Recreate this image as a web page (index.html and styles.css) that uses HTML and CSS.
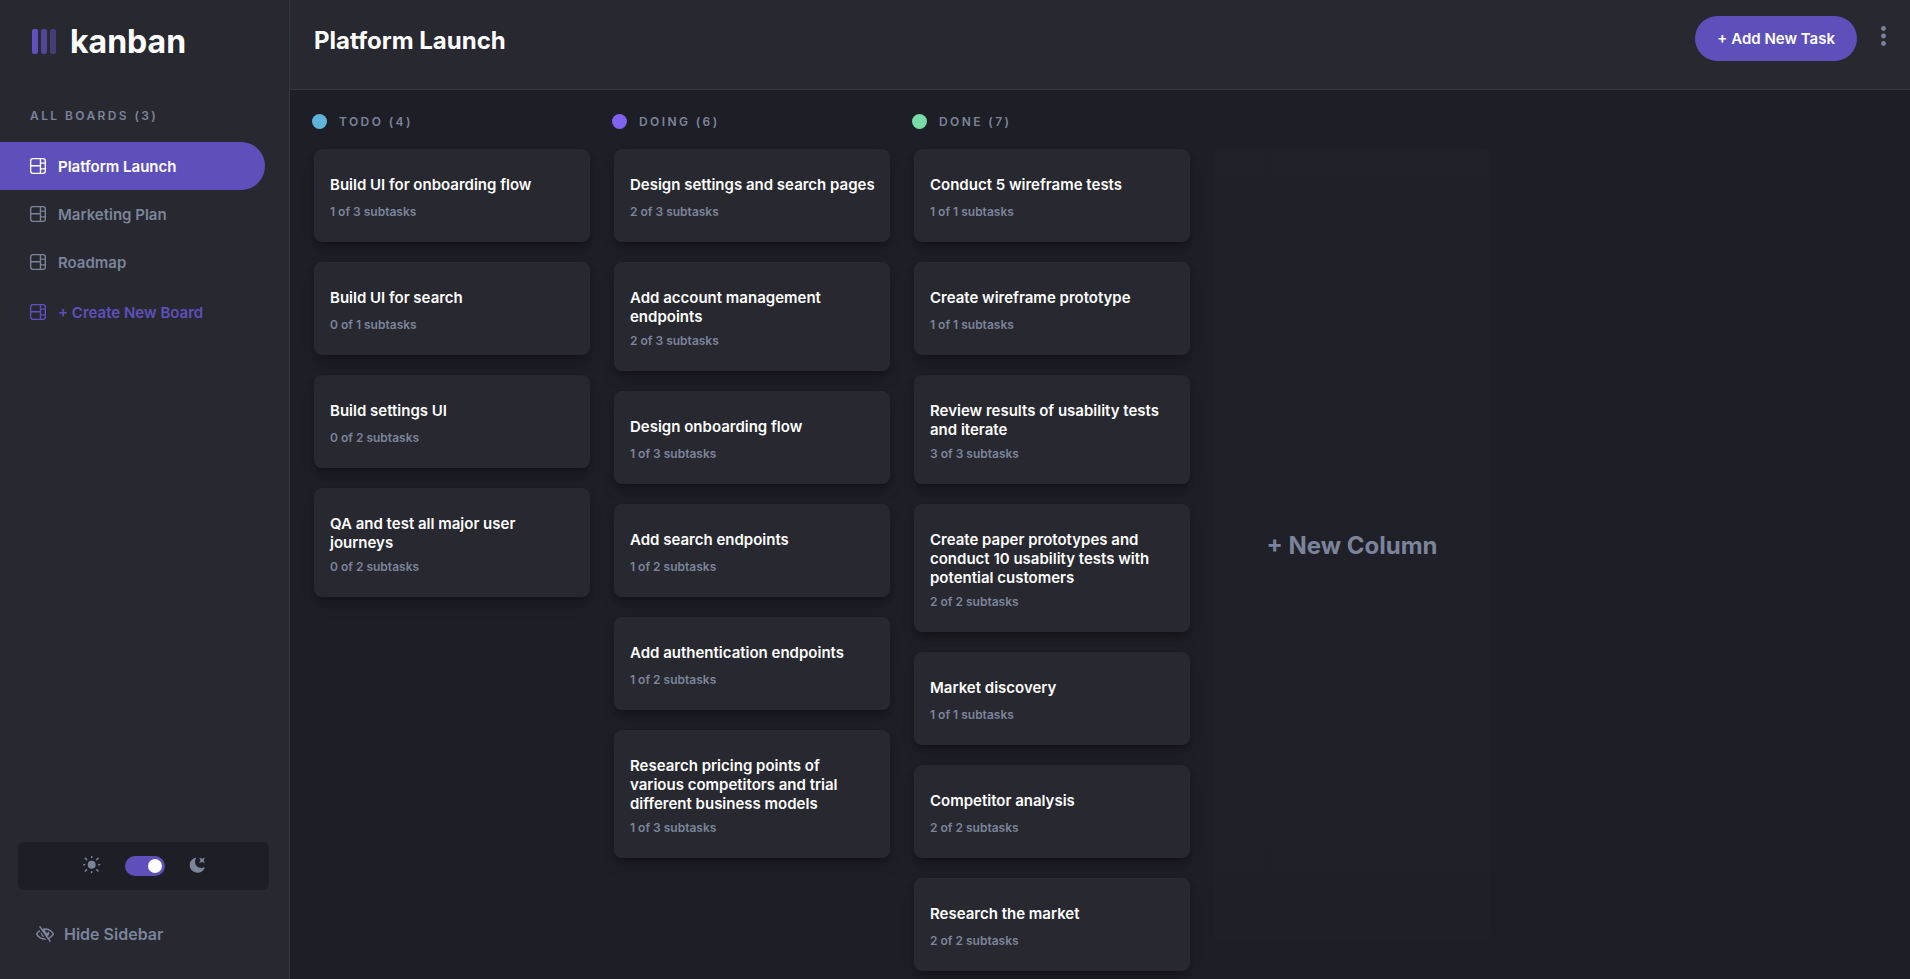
FILE: index.html
```html
<!DOCTYPE html>
<html lang="en">
<head>
<meta charset="utf-8">
<title>Kanban</title>
<link rel="stylesheet" href="styles.css">
</head>
<body>
<svg class="defs" aria-hidden="true">
  <symbol id="board" viewBox="0 0 16 16">
    <path fill="currentColor" d="M0 2.889A2.889 2.889 0 0 1 2.889 0H13.11A2.889 2.889 0 0 1 16 2.889V13.11A2.888 2.888 0 0 1 13.111 16H2.89A2.889 2.889 0 0 1 0 13.111V2.89Zm1.333 5.555v4.667c0 .859.697 1.556 1.556 1.556h6.889V8.444H1.333Zm8.445-1.333V1.333h-6.89A1.556 1.556 0 0 0 1.334 2.89V7.11h8.445Zm4.889-1.333H11.11v4.444h3.556V5.778Zm0 5.778H11.11v3.11h2a1.556 1.556 0 0 0 1.556-1.555v-1.555Zm0-7.112V2.89a1.555 1.555 0 0 0-1.556-1.556h-2v3.111h3.556Z"/>
  </symbol>
</svg>
<div class="app">
  <aside class="sidebar">
    <div class="logo">
      <svg width="24" height="25" viewBox="0 0 24 25" aria-hidden="true"><g fill="#5f50be"><rect width="6" height="25" rx="2"/><rect x="9" width="6" height="25" rx="2" opacity=".75"/><rect x="18" width="6" height="25" rx="2" opacity=".5"/></g></svg>
      <span>kanban</span>
    </div>
    <h2 class="label boards-title">ALL BOARDS (3)</h2>
    <nav class="boards">
      <a class="board active" href="#"><svg class="icon"><use href="#board"/></svg>Platform Launch</a>
      <a class="board" href="#"><svg class="icon"><use href="#board"/></svg>Marketing Plan</a>
      <a class="board" href="#"><svg class="icon"><use href="#board"/></svg>Roadmap</a>
    </nav>
    <button class="board create" type="button"><svg class="icon"><use href="#board"/></svg>+ Create New Board</button>
    <div class="theme">
      <svg width="18" height="18" viewBox="0 0 19 19" aria-hidden="true"><path fill="currentColor" d="M9.167 15.833a.833.833 0 0 1 .833.834v.833a.833.833 0 0 1-1.667 0v-.833a.833.833 0 0 1 .834-.834ZM3.75 13.75a.833.833 0 0 1 .59 1.422l-1.25 1.25a.833.833 0 0 1-1.18-1.178l1.25-1.25a.833.833 0 0 1 .59-.244Zm10.833 0c.221 0 .433.088.59.244l1.25 1.25a.833.833 0 0 1-1.179 1.178l-1.25-1.25a.833.833 0 0 1 .59-1.422ZM9.167 5a4.167 4.167 0 1 1 0 8.334 4.167 4.167 0 0 1 0-8.334Zm-7.5 3.333a.833.833 0 0 1 0 1.667H.833a.833.833 0 1 1 0-1.667h.834Zm15.833 0a.833.833 0 0 1 0 1.667h-.833a.833.833 0 0 1 0-1.667h.833Zm-1.667-6.667a.833.833 0 0 1 .59 1.422l-1.25 1.25a.833.833 0 1 1-1.179-1.178l1.25-1.25a.833.833 0 0 1 .59-.244Zm-13.333 0c.221 0 .433.088.59.244l1.25 1.25a.833.833 0 0 1-1.18 1.178L1.91 3.088a.833.833 0 0 1 .59-1.422ZM9.167 0A.833.833 0 0 1 10 .833v.834a.833.833 0 1 1-1.667 0V.833A.833.833 0 0 1 9.167 0Z"/></svg>
      <input class="switch" type="checkbox" role="switch" aria-label="Dark theme" checked>
      <svg width="16" height="16" viewBox="0 0 16 16" aria-hidden="true"><path fill="currentColor" d="M6.474.682c.434-.11.718.406.481.78A6.067 6.067 0 0 0 6.01 4.72c0 3.418 2.827 6.187 6.314 6.187.89.002 1.77-.182 2.584-.54.408-.18.894.165.724.57-1.16 2.775-3.944 4.73-7.194 4.73-4.292 0-7.771-3.41-7.771-7.615 0-3.541 2.466-6.518 5.807-7.37Zm8.433.07c.442-.294.969.232.674.674l-.525.787a1.943 1.943 0 0 0 0 2.157l.525.788c.295.441-.232.968-.674.673l-.787-.525a1.943 1.943 0 0 0-2.157 0l-.786.525c-.442.295-.97-.232-.675-.673l.525-.788a1.943 1.943 0 0 0 0-2.157l-.525-.787c-.295-.442.232-.968.674-.673l.787.525a1.943 1.943 0 0 0 2.157 0Z"/></svg>
    </div>
    <button class="hide" type="button">
      <svg width="18" height="16" viewBox="0 0 18 16" aria-hidden="true"><path fill="currentColor" d="M8.522 11.223a4.252 4.252 0 0 1-3.654-5.22l3.654 5.22ZM9 12.25A8.685 8.685 0 0 1 1.5 8a8.612 8.612 0 0 1 2.76-2.864l-.86-1.23A10.112 10.112 0 0 0 .208 7.238a1.5 1.5 0 0 0 0 1.524A10.187 10.187 0 0 0 9 13.75c.414 0 .828-.025 1.239-.074l-1-1.43A8.88 8.88 0 0 1 9 12.25Zm8.792-3.488a10.14 10.14 0 0 1-4.486 4.046l1.504 2.148a.375.375 0 0 1-.092.523l-.648.453a.375.375 0 0 1-.523-.092L3.19 1.044A.375.375 0 0 1 3.282.52L3.93.068a.375.375 0 0 1 .523.092l1.735 2.479A10.308 10.308 0 0 1 9 2.25c3.746 0 7.031 2 8.792 4.988a1.5 1.5 0 0 1 0 1.524ZM16.5 8a8.674 8.674 0 0 0-6.755-4.219A1.75 1.75 0 1 0 12.75 5v-.001a4.25 4.25 0 0 1-1.154 5.366l.834 1.192A8.641 8.641 0 0 0 16.5 8Z"/></svg>
      Hide Sidebar
    </button>
  </aside>
  <main class="main">
    <header class="header">
      <h1>Platform Launch</h1>
      <div class="actions">
        <button class="add" type="button">+ Add New Task</button>
        <button class="more" type="button" aria-label="Board menu"><svg width="5" height="20" viewBox="0 0 5 20"><g fill="currentColor"><circle cx="2.5" cy="2.5" r="2.4"/><circle cx="2.5" cy="10" r="2.4"/><circle cx="2.5" cy="17.5" r="2.4"/></g></svg></button>
      </div>
    </header>
    <div class="columns">
      <section class="column">
        <h2 class="label column-title"><span class="dot todo"></span>TODO (4)</h2>
        <article class="card"><h3>Build UI for onboarding flow</h3><p>1 of 3 subtasks</p></article>
        <article class="card"><h3>Build UI for search</h3><p>0 of 1 subtasks</p></article>
        <article class="card"><h3>Build settings UI</h3><p>0 of 2 subtasks</p></article>
        <article class="card"><h3>QA and test all major user journeys</h3><p>0 of 2 subtasks</p></article>
      </section>
      <section class="column">
        <h2 class="label column-title"><span class="dot doing"></span>DOING (6)</h2>
        <article class="card"><h3>Design settings and search pages</h3><p>2 of 3 subtasks</p></article>
        <article class="card"><h3>Add account management endpoints</h3><p>2 of 3 subtasks</p></article>
        <article class="card"><h3>Design onboarding flow</h3><p>1 of 3 subtasks</p></article>
        <article class="card"><h3>Add search endpoints</h3><p>1 of 2 subtasks</p></article>
        <article class="card"><h3>Add authentication endpoints</h3><p>1 of 2 subtasks</p></article>
        <article class="card"><h3>Research pricing points of various competitors and trial different business models</h3><p>1 of 3 subtasks</p></article>
      </section>
      <section class="column">
        <h2 class="label column-title"><span class="dot done"></span>DONE (7)</h2>
        <article class="card"><h3>Conduct 5 wireframe tests</h3><p>1 of 1 subtasks</p></article>
        <article class="card"><h3>Create wireframe prototype</h3><p>1 of 1 subtasks</p></article>
        <article class="card"><h3>Review results of usability tests and iterate</h3><p>3 of 3 subtasks</p></article>
        <article class="card"><h3>Create paper prototypes and conduct 10 usability tests with potential customers</h3><p>2 of 2 subtasks</p></article>
        <article class="card"><h3>Market discovery</h3><p>1 of 1 subtasks</p></article>
        <article class="card"><h3>Competitor analysis</h3><p>2 of 2 subtasks</p></article>
        <article class="card"><h3>Research the market</h3><p>2 of 2 subtasks</p></article>
      </section>
      <button class="new-column" type="button">+ New Column</button>
    </div>
  </main>
</div>
</body>
</html>
```

FILE: styles.css
```css
:root {
  --panel: #282830;
  --page: #1e1e26;
  --line: #35363f;
  --muted: #7b849b;
  --accent: #5e50bb;
}

* { box-sizing: border-box; }

body {
  margin: 0;
  background: var(--page);
  color: #fff;
  font-family: Inter, "Open Sans", sans-serif;
  font-size: 15px;
  font-weight: 600;
}

h1, h2, h3, p { margin: 0; }

button {
  border: 0;
  padding: 0;
  background: none;
  color: inherit;
  font: inherit;
  cursor: pointer;
}

svg { display: block; flex: none; }
.defs { position: absolute; width: 0; height: 0; }

.app {
  display: flex;
  height: 100vh;
  overflow: hidden;
}

.label {
  color: var(--muted);
  font-size: 12px;
  font-weight: 600;
  line-height: 15px;
  letter-spacing: .2em;
}

/* Sidebar */
.sidebar {
  display: flex;
  flex: none;
  flex-direction: column;
  width: 290px;
  background: var(--panel);
  border-right: 1px solid var(--line);
}

.logo {
  display: flex;
  align-items: center;
  gap: 14px;
  height: 82px;
  padding-left: 32px;
  font-size: 32px;
  font-weight: 700;
}

.boards-title { padding: 26px 30px 19px; }

.board {
  display: flex;
  align-items: center;
  gap: 12px;
  width: 265px;
  height: 48px;
  padding-left: 30px;
  border-radius: 0 24px 24px 0;
  color: var(--muted);
  text-decoration: none;
}

.board.active { background: var(--accent); color: #fff; }
.board.create { margin-top: 2px; color: var(--accent); }
.icon { width: 16px; height: 16px; }

.theme {
  display: flex;
  align-items: center;
  justify-content: center;
  gap: 24px;
  height: 48px;
  margin: auto 20px 0 18px;
  border-radius: 6px;
  background: var(--page);
  color: var(--muted);
}

.theme svg { margin-bottom: 3px; }

.switch {
  appearance: none;
  width: 40px;
  height: 20px;
  margin: 0;
  padding: 3px;
  border-radius: 10px;
  background: var(--accent);
}

.switch::before {
  content: "";
  display: block;
  width: 14px;
  height: 14px;
  margin-left: auto;
  border-radius: 50%;
  background: #fff;
}

.hide {
  display: flex;
  align-items: center;
  gap: 10px;
  height: 48px;
  margin: 20px 18px 21px;
  padding-left: 18px;
  color: var(--muted);
  font-size: 16px;
}

/* Header */
.main {
  display: flex;
  flex: 1;
  flex-direction: column;
  min-width: 0;
}

.header {
  display: flex;
  flex: none;
  align-items: flex-start;
  justify-content: space-between;
  height: 90px;
  padding: 16px 24px 0;
  background: var(--panel);
  border-bottom: 1px solid var(--line);
}

.header h1 {
  font-size: 24px;
  font-weight: 700;
  line-height: 50px;
}

.actions { display: flex; gap: 24px; }

.add {
  height: 45px;
  padding: 0 22px;
  border-radius: 24px;
  background: var(--accent);
}

.more { height: 40px; color: var(--muted); }

/* Board */
.columns {
  display: flex;
  flex: 1;
  gap: 24px;
  min-height: 0;
  padding: 24px 24px 0;
  overflow: hidden;
}

.column {
  display: flex;
  flex: none;
  flex-direction: column;
  gap: 20px;
  width: 276px;
}

.column-title {
  display: flex;
  align-items: center;
  gap: 12px;
  margin-left: -2px;
}

.dot { width: 15px; height: 15px; border-radius: 50%; }
.todo { background: #60b4dc; }
.doing { background: #8062f0; }
.done { background: #78dca8; }

.card {
  flex: none;
  padding: 26px 14px 22px 16px;
  border-radius: 8px;
  background: var(--panel);
  box-shadow: 0 10px 15px -3px rgba(0, 0, 0, .2), 0 4px 6px -2px rgba(0, 0, 0, .3);
}

.card h3 {
  min-height: 22px;
  font-size: 15px;
  font-weight: 600;
  line-height: 19px;
}

.card p {
  padding-top: 7px;
  color: var(--muted);
  font-size: 12px;
  line-height: 16px;
}

.new-column {
  flex: none;
  width: 276px;
  margin: 35px 0 38px;
  border-radius: 8px;
  background: linear-gradient(rgba(43, 44, 55, .15), rgba(43, 44, 55, .08));
  color: var(--muted);
  font-size: 24px;
  font-weight: 700;
}
```
